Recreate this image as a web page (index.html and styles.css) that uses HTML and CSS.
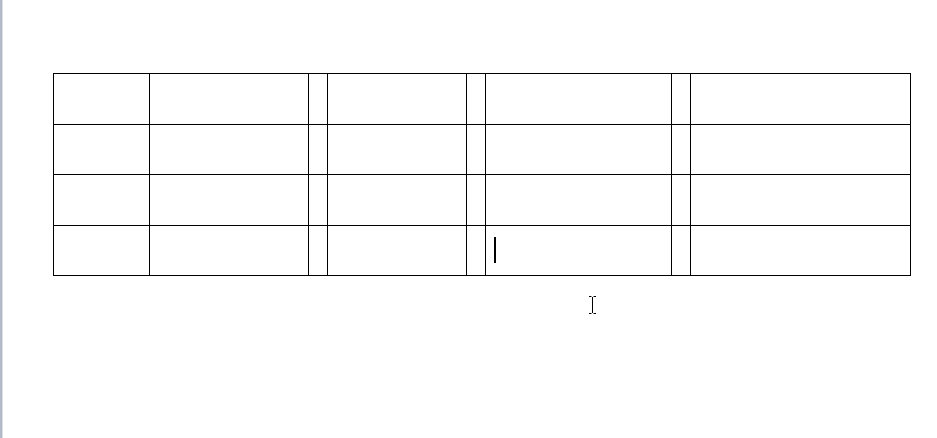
FILE: index.html
```html
<!DOCTYPE html>
<html>
<head>
<meta charset="utf-8">
<link rel="stylesheet" href="styles.css">
</head>
<body>
<div class="page">
  <div class="edge"></div>
  <div class="doc">
    <div class="grid">
      <div></div><div></div><div></div><div></div><div></div><div></div><div></div><div></div>
      <div></div><div></div><div></div><div></div><div></div><div></div><div></div><div></div>
      <div></div><div></div><div></div><div></div><div></div><div></div><div></div><div></div>
      <div></div><div></div><div></div><div></div><div></div><div class="active"><span class="caret"></span></div><div></div><div></div>
    </div>
  </div>
  <svg class="ibeam" width="9" height="18" viewBox="0 0 9 18">
    <path d="M1 0.5H3.5M5.5 0.5H8M4.5 1V17M1 17.5H3.5M5.5 17.5H8" stroke="#000" stroke-width="1" fill="none"/>
  </svg>
</div>
</body>
</html>
```
FILE: styles.css
```css
html, body {
  margin: 0;
  padding: 0;
  background: #fff;
}
.page {
  position: relative;
  display: flex;
  width: 937px;
  height: 438px;
  overflow: hidden;
}
.edge {
  width: 2px;
  background: #b5b8c6;
  border-right: 1px solid #dcdee6;
  flex: none;
}
.doc {
  padding: 73px 0 0 50px;
}
.grid {
  display: grid;
  grid-template-columns: 95px 158px 18px 138px 18px 185px 18px 219px;
  grid-template-rows: 50px 49px 50px 49px;
  gap: 1px;
  background: #000;
  border: 1px solid #000;
}
.grid > div {
  background: #fff;
}
.active {
  padding: 11px 0 0 8px;
  box-sizing: border-box;
}
.caret {
  display: block;
  width: 2px;
  height: 26px;
  background: #000;
}
.ibeam {
  position: absolute;
  left: 588px;
  top: 296px;
}
```
